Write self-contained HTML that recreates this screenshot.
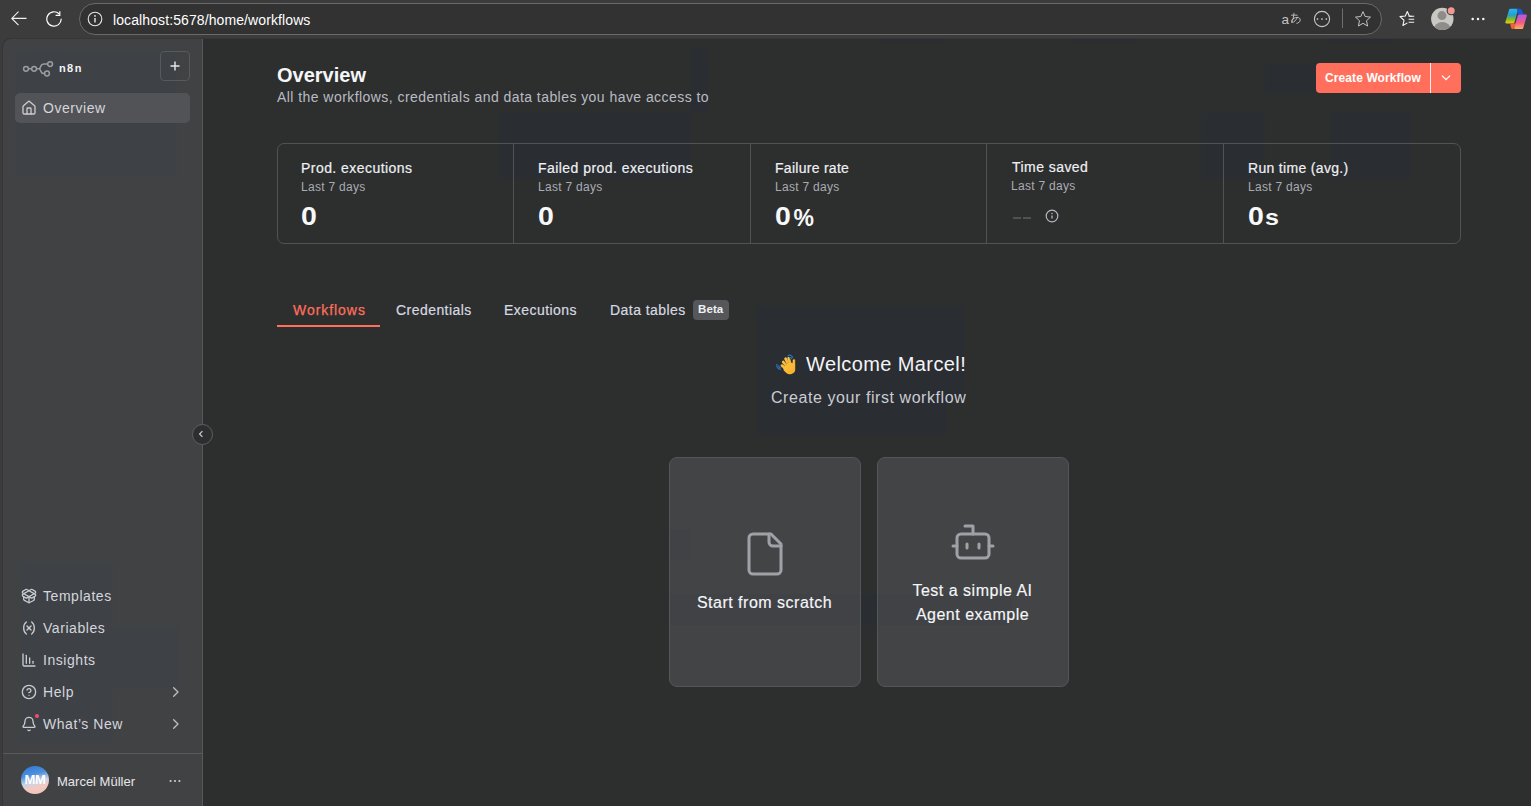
<!DOCTYPE html>
<html><head><meta charset="utf-8">
<style>
*{box-sizing:border-box;margin:0;padding:0}
html,body{width:1531px;height:806px;overflow:hidden;background:#3c3c3c;font-family:"Liberation Sans",sans-serif;}
.abs{position:absolute}
#chrome{position:absolute;left:0;top:0;width:1531px;height:39px;background:#3c3c3c}
#addr{position:absolute;left:79px;top:3px;width:1303px;height:32px;border:1px solid #6a6a6a;border-radius:16px;background:#323232}
#page{position:absolute;left:3px;top:39px;width:1540px;height:780px;background:#2d2e2e;border-radius:8px 0 0 0;box-shadow:0 0 0 1px #363636}
#side{position:absolute;left:3px;top:39px;width:200px;height:780px;background:#414244;border-right:1px solid #58595b;border-radius:8px 0 0 0}
.t{position:absolute;white-space:nowrap;line-height:1}
.nav{font-size:14px;color:#d4d6dc;letter-spacing:0.55px}
.st{font-size:14px;color:#eef0f3;letter-spacing:0.45px;-webkit-text-stroke:0.2px #eef0f3}
.sub{font-size:12px;color:#a9acb3;letter-spacing:0.3px}
.big{font-size:25px;font-weight:bold;color:#f7f8fa;letter-spacing:2px;transform:scaleX(1.14);transform-origin:0 0}
.tab{font-size:14px;color:#d6d9e0;letter-spacing:0.45px;-webkit-text-stroke:0.2px #d6d9e0}
.card{width:192px;height:230px;background:#434446;border:1px solid #555659;border-radius:8px}
.ct{font-size:16px;color:#f5f6f8;letter-spacing:0.5px;-webkit-text-stroke:0.15px #f5f6f8}
.ghost{position:absolute;background:rgba(30,40,60,0.18)}
</style></head><body>
<div id="chrome">
  <!-- back arrow -->
  <svg class="abs" style="left:10px;top:10px" width="18" height="18" viewBox="0 0 18 18"><path d="M16.5 8.4H1.8M8.5 1.6L1.8 8.4l6.7 6.8" stroke="#f2f2f2" stroke-width="1.1" fill="none"/></svg>
  <!-- reload -->
  <svg class="abs" style="left:46px;top:10px" width="18" height="18" viewBox="0 0 18 18"><path d="M15.2 8.8A7.2 7.2 0 1 1 13.2 4" stroke="#fff" stroke-width="1.2" fill="none"/><path d="M13.8 1.2v4.2H9.6" stroke="#fff" stroke-width="1.2" fill="none"/></svg>
  <div id="addr"></div>
  <svg class="abs" style="left:87px;top:11px" width="16" height="16" viewBox="0 0 16 16"><circle cx="8" cy="8" r="6.8" stroke="#e8e8e8" stroke-width="1.1" fill="none"/><path d="M8 7v4.5" stroke="#e8e8e8" stroke-width="1.4"/><circle cx="8" cy="4.9" r="0.9" fill="#e8e8e8"/></svg>
  <div class="t" style="left:113px;top:13px;font-size:14px;color:#fff;letter-spacing:0.1px">localhost:5678/home/workflows</div>
  <svg class="abs" style="left:0;top:0" width="1531" height="39" viewBox="0 0 1531 39">
    <defs>
      <linearGradient id="cl" x1="0" y1="0" x2="0" y2="1"><stop offset="0" stop-color="#22b8f8"/><stop offset="0.45" stop-color="#2a9fc0"/><stop offset="0.7" stop-color="#7cbc2c"/><stop offset="1" stop-color="#f3c80a"/></linearGradient>
      <linearGradient id="cr" x1="0" y1="0" x2="0" y2="1"><stop offset="0" stop-color="#a95cf0"/><stop offset="0.55" stop-color="#f05a88"/><stop offset="1" stop-color="#ffac5c"/></linearGradient>
      <clipPath id="pc"><circle cx="1442.3" cy="18.9" r="11.2"/></clipPath>
    </defs>
    <text x="1281.5" y="23.5" font-family="Liberation Sans" font-size="13.5" fill="#c4c4c4">a</text>
    <path d="M1291.5 15.2h5.6M1294 13.3c-.3 3-.9 6.5-2.2 9.2M1297.5 17.2c-1.6 3.200-3.500 5.200-5 5.200-1 0-1.300-1.200-.6-2.400 1-1.600 3.200-2.600 5.300-2.600 1.800 0 3 1 3 2.600 0 1.800-1.600 3-3.400 3.300" stroke="#c4c4c4" stroke-width="0.9" fill="none" stroke-linecap="round"/>
    <circle cx="1322" cy="19" r="7.6" stroke="#c8c8c8" stroke-width="1.1" fill="none"/>
    <rect x="1316.7" y="18.3" width="1.5" height="1.5" fill="#c8c8c8"/><rect x="1321.2" y="18.3" width="1.5" height="1.5" fill="#c8c8c8"/><rect x="1325.6" y="18.3" width="1.5" height="1.5" fill="#c8c8c8"/>
    <rect x="1342" y="8.5" width="1" height="19.5" fill="#6e6e6e"/>
    <path d="M1363 11.6l2.2 4.9 5.3.6-4 3.6 1.1 5.3-4.6-2.7-4.6 2.7 1.1-5.3-4-3.6 5.3-.6z" stroke="#c4c4c4" stroke-width="1" fill="none" stroke-linejoin="round"/>
    <path d="M1411.5 16.3l-2.2-.25-2-4.6-2 4.6-5.3.6 4 3.6-1.1 5.3 4.1-2.4" stroke="#f4f4f4" stroke-width="1.1" fill="none" stroke-linejoin="round" stroke-linecap="round"/>
    <path d="M1408.6 16.3h5.6M1408.6 19.3h5.6M1408.6 22.3h5.6" stroke="#f4f4f4" stroke-width="1.1"/>
    <circle cx="1442.3" cy="18.9" r="11.2" fill="#cac8c5"/>
    <circle cx="1442" cy="15.6" r="4.5" fill="#8f8c89"/>
    <ellipse cx="1442.3" cy="29.5" rx="8.5" ry="7.6" fill="#8f8c89" clip-path="url(#pc)"/>
    <circle cx="1451.2" cy="10.7" r="4.6" fill="#3c3c3c"/>
    <circle cx="1451.2" cy="10.7" r="3.5" fill="#f19a94"/>
    <circle cx="1472.7" cy="18.9" r="1.25" fill="#f4f4f4"/><circle cx="1478" cy="18.9" r="1.25" fill="#f4f4f4"/><circle cx="1483.3" cy="18.9" r="1.25" fill="#f4f4f4"/>
    <path d="M1510.5 8.8h6.5c.8 0 1.2.6 1 1.3l-3.6 12.4c-.2.6-.7.9-1.3.9h-6.7c-.8 0-1.2-.6-1-1.3l3.7-12.3c.2-.6.7-1 1.4-1z" fill="url(#cl)"/>
    <path d="M1516.5 8.8h3.3c.8 0 1.4.4 1.8 1.2l2.3 4.4h-5.300z" fill="#1a5ad8"/>
    <path d="M1520.3 14.4h5.4c.8 0 1.3.6 1.1 1.3l-3.5 12.3c-.2.6-.7.9-1.3.9h-6.8c-.8 0-1.2-.6-1-1.3l3.7-12.2c.3-.7.8-1 1.4-1z" fill="url(#cr)"/>
    <path d="M1510.2 23.4h5.8l-2.5 5.5h-.8c-.8 0-1.4-.4-1.7-1.2z" fill="#f0643a"/>
  </svg>
</div>

<div id="page"></div>
<div id="side"></div>
<!-- ghosts -->
<div class="abs" style="left:690px;top:49px;width:18px;height:64px;background:#2a2d32"></div>
<div class="abs" style="left:498px;top:113px;width:192px;height:65px;background:#2a2d32"></div>
<div class="abs" style="left:1265px;top:63px;width:51px;height:30px;background:#2a2d32"></div>
<div class="abs" style="left:1201px;top:113px;width:64px;height:65px;background:#2a2d32"></div>
<div class="abs" style="left:1330px;top:113px;width:80px;height:65px;background:#2a2d32"></div>
<div class="abs" style="left:757px;top:306px;width:189px;height:128px;background:#2a2d32"></div>
<div class="abs" style="left:946px;top:306px;width:18px;height:94px;background:#2a2d32"></div>
<div class="abs" style="left:881px;top:39px;width:65px;height:3px;background:#2b2d30"></div>
<div class="abs" style="left:1072px;top:39px;width:65px;height:3px;background:#2b2d30"></div>
<div class="abs" style="left:1328px;top:39px;width:64px;height:3px;background:#2b2d30"></div>
<div class="abs" style="left:15px;top:50px;width:162px;height:126px;background:#3e4146"></div>
<div class="abs" style="left:20px;top:562px;width:93px;height:181px;background:#3e4146"></div>
<div class="abs" style="left:85px;top:626px;width:93px;height:63px;background:#3e4146"></div>
<!-- sidebar content -->
<svg class="abs" style="left:20px;top:60px" width="36" height="18" viewBox="20 60 36 18" fill="none" stroke="#9d9d9f" stroke-width="1.5">
  <circle cx="26" cy="68.8" r="2.4"/><circle cx="34.1" cy="68.8" r="2.4"/>
  <path d="M28.4 68.8h3.3M36.5 68.8h2.3"/>
  <path d="M38.8 68.8c1.5 0 1.6-1.2 2-2.5c.5-1.6 1.2-2.2 3-2.2h3.9"/>
  <path d="M38.8 68.8c1.5 0 1.6 1.2 2 2.5c.5 1.6 1.2 2.2 3 2.2h1"/>
  <circle cx="50.1" cy="64.1" r="2.4"/><circle cx="47" cy="73.5" r="2.4"/>
</svg>
<div class="t" style="left:59px;top:62.5px;font-size:11px;font-weight:bold;color:#f4f4f5;letter-spacing:1.4px">n8n</div>
<div class="abs" style="left:160px;top:51px;width:30px;height:30px;border:1px solid #59595c;border-radius:4px"></div>
<svg class="abs" style="left:169px;top:60px" width="12" height="12" viewBox="0 0 12 12"><path d="M6 1.5v9M1.5 6h9" stroke="#e8e8ea" stroke-width="1.4"/></svg>
<div class="abs" style="left:15px;top:93px;width:175px;height:30px;background:#525356;border-radius:5px"></div>
<svg class="abs" style="left:21px;top:100px" width="16" height="16" viewBox="0 0 24 24" fill="none" stroke="#c9cbd1" stroke-width="2" stroke-linecap="round" stroke-linejoin="round"><path d="M15 21v-8a1 1 0 0 0-1-1h-4a1 1 0 0 0-1 1v8"/><path d="M3 10a2 2 0 0 1 .709-1.528l7-5.999a2 2 0 0 1 2.582 0l7 5.999A2 2 0 0 1 21 10v9a2 2 0 0 1-2 2H5a2 2 0 0 1-2-2z"/></svg>
<div class="t nav" style="left:43px;top:101px">Overview</div>

<svg class="abs" style="left:21px;top:588px" width="16" height="16" viewBox="0 0 24 24" fill="none" stroke="#c9cbd1" stroke-width="2" stroke-linecap="round" stroke-linejoin="round"><path d="M12 22v-9"/><path d="M15.17 2.21a1.67 1.67 0 0 1 1.63 0L21 4.57a1.93 1.93 0 0 1 0 3.36L8.82 14.79a1.655 1.655 0 0 1-1.64 0L3 12.43a1.93 1.93 0 0 1 0-3.36z"/><path d="M20 13v3.87a2.06 2.06 0 0 1-1.110 1.830l-6 3.080a1.930 1.930 0 0 1-1.780 0l-6-3.080A2.06 2.06 0 0 1 4 16.87V13"/><path d="M21 12.43a1.93 1.93 0 0 0 0-3.36L8.83 2.2a1.64 1.64 0 0 0-1.63 0L3 4.57a1.93 1.93 0 0 0 0 3.36l12.18 6.86a1.636 1.636 0 0 0 1.630 0z"/></svg>
<div class="t nav" style="left:43px;top:589px">Templates</div>
<svg class="abs" style="left:21px;top:620px" width="16" height="16" viewBox="0 0 24 24" fill="none" stroke="#c9cbd1" stroke-width="2" stroke-linecap="round" stroke-linejoin="round"><path d="M8 21s-4-3-4-9 4-9 4-9"/><path d="M16 3s4 3 4 9-4 9-4 9"/><path d="M15 9l-6 6"/><path d="M9 9l6 6"/></svg>
<div class="t nav" style="left:43px;top:621px">Variables</div>
<svg class="abs" style="left:21px;top:652px" width="16" height="16" viewBox="0 0 24 24" fill="none" stroke="#c9cbd1" stroke-width="2" stroke-linecap="round" stroke-linejoin="round"><path d="M13 17V9"/><path d="M18 17v-3"/><path d="M3 3v16a2 2 0 0 0 2 2h16"/><path d="M8 17V5"/></svg>
<div class="t nav" style="left:43px;top:653px">Insights</div>
<svg class="abs" style="left:21px;top:684px" width="16" height="16" viewBox="0 0 24 24" fill="none" stroke="#c9cbd1" stroke-width="2" stroke-linecap="round" stroke-linejoin="round"><circle cx="12" cy="12" r="10"/><path d="M9.09 9a3 3 0 0 1 5.83 1c0 2-3 3-3 3"/><path d="M12 17h.01"/></svg>
<div class="t nav" style="left:43px;top:685px">Help</div>
<svg class="abs" style="left:168px;top:684px" width="16" height="16" viewBox="0 0 24 24" fill="none" stroke="#bcbdca" stroke-width="2" stroke-linecap="round" stroke-linejoin="round"><path d="m8.5 18.5 6.5-6.5-6.5-6.5"/></svg>
<svg class="abs" style="left:21px;top:716px" width="16" height="16" viewBox="0 0 24 24" fill="none" stroke="#c9cbd1" stroke-width="2" stroke-linecap="round" stroke-linejoin="round"><path d="M10.268 21a2 2 0 0 0 3.464 0"/><path d="M3.262 15.326A1 1 0 0 0 4 17h16a1 1 0 0 0 .74-1.673C19.41 13.956 18 12.499 18 8A6 6 0 0 0 6 8c0 4.499-1.411 5.956-2.738 7.326"/></svg>
<div class="abs" style="left:35px;top:714px;width:4px;height:4px;border-radius:50%;background:#f0506a"></div>
<div class="t nav" style="left:43px;top:717px">What’s New</div>
<svg class="abs" style="left:168px;top:716px" width="16" height="16" viewBox="0 0 24 24" fill="none" stroke="#bcbdca" stroke-width="2" stroke-linecap="round" stroke-linejoin="round"><path d="m8.5 18.5 6.5-6.5-6.5-6.5"/></svg>
<div class="abs" style="left:3px;top:753px;width:199px;height:1px;background:#58595b"></div>
<div class="abs" style="left:21px;top:766px;width:28px;height:28px;border-radius:50%;background:linear-gradient(165deg,#2a78d6 0%,#4f8fdc 33%,#c9d4e6 55%,#f3c9c2 72%,#f1c0b8 100%)"></div>
<div class="t" style="left:21px;top:772.5px;width:28px;text-align:center;font-size:13px;font-weight:bold;color:#fff;letter-spacing:-0.3px">MM</div>
<div class="t" style="left:57px;top:775px;font-size:13px;color:#e6e7ea">Marcel Müller</div>
<svg class="abs" style="left:167px;top:776px" width="16" height="10" viewBox="0 0 16 10"><circle cx="3.6" cy="5" r="1.1" fill="#c9cbd1"/><circle cx="8" cy="5" r="1.1" fill="#c9cbd1"/><circle cx="12.4" cy="5" r="1.1" fill="#c9cbd1"/></svg>
<!-- collapse -->
<div class="abs" style="left:192px;top:424px;width:21px;height:21px;border-radius:50%;background:#2d2e2e;border:1px solid #5e5f62"></div>
<svg class="abs" style="left:196px;top:428px" width="12" height="12" viewBox="0 0 12 12"><path d="M6.4 3.1L3.6 6l2.8 2.9" stroke="#c4c6d2" stroke-width="1.3" fill="none"/></svg>
<div id="content">
<div class="t" style="left:277px;top:65px;font-size:20px;font-weight:bold;color:#f5f6f8">Overview</div>
<div class="t" style="left:277px;top:90px;font-size:14px;color:#b9bcc4;letter-spacing:0.445px">All the workflows, credentials and data tables you have access to</div>
<div class="abs" style="left:1316px;top:63px;width:145px;height:30px;background:#ff6f5c;border-radius:4px"></div>
<div class="abs" style="left:1430px;top:63px;width:1px;height:30px;background:#fff;opacity:.9"></div>
<div class="t" style="left:1325px;top:72px;font-size:12px;font-weight:bold;color:#fff;letter-spacing:0.1px">Create Workflow</div>
<svg class="abs" style="left:1440px;top:72px" width="12" height="12" viewBox="0 0 12 12"><path d="M2 3.6L6 7.6l4-4" stroke="#fff" stroke-width="1.3" fill="none"/></svg>

<div class="abs" style="left:277px;top:143px;width:1184px;height:101px;border:1px solid #515254;border-radius:7px"></div>
<div class="abs" style="left:513px;top:144px;width:1px;height:99px;background:#515254"></div>
<div class="abs" style="left:750px;top:144px;width:1px;height:99px;background:#515254"></div>
<div class="abs" style="left:986px;top:144px;width:1px;height:99px;background:#515254"></div>
<div class="abs" style="left:1223px;top:144px;width:1px;height:99px;background:#515254"></div>

<div class="t st" style="left:301px;top:161px">Prod. executions</div>
<div class="t sub" style="left:301px;top:181px">Last 7 days</div>
<div class="t big" style="left:301px;top:204px">0</div>
<div class="t st" style="left:538px;top:161px">Failed prod. executions</div>
<div class="t sub" style="left:538px;top:181px">Last 7 days</div>
<div class="t big" style="left:538px;top:204px">0</div>
<div class="t st" style="left:775px;top:161px;letter-spacing:0.28px">Failure rate</div>
<div class="t sub" style="left:775px;top:181px">Last 7 days</div>
<div class="t big" style="left:775px;top:204px"><span style="letter-spacing:0">0</span></div>
<div class="t" style="left:793.5px;top:206.5px;font-size:23px;font-weight:bold;color:#f7f8fa">%</div>
<div class="t st" style="left:1012px;top:160px">Time saved</div>
<div class="t sub" style="left:1011px;top:180px">Last 7 days</div>
<div class="abs" style="left:1013px;top:217px;width:8px;height:2px;background:#505155"></div>
<div class="abs" style="left:1023px;top:217px;width:8px;height:2px;background:#505155"></div>
<svg class="abs" style="left:1044px;top:208px" width="16" height="16" viewBox="0 0 16 16"><circle cx="8" cy="8" r="5.8" stroke="#b4b8c2" stroke-width="1.2" fill="none"/><path d="M8 7.4v3.2" stroke="#b4b8c2" stroke-width="1.3"/><circle cx="8" cy="5.5" r=".8" fill="#b0b2b8"/></svg>
<div class="t st" style="left:1248px;top:161px;letter-spacing:0.32px">Run time (avg.)</div>
<div class="t sub" style="left:1248px;top:181px">Last 7 days</div>
<div class="t big" style="left:1248px;top:204px"><span style="letter-spacing:0">0</span><span style="letter-spacing:0;font-size:22px;margin-left:1px">s</span></div>

<div class="t tab" style="left:293px;top:303px;color:#ff6f5c;letter-spacing:0.95px;-webkit-text-stroke:0.25px #ff6f5c">Workflows</div>
<div class="abs" style="left:277px;top:325px;width:103px;height:2px;background:#ff6f5c"></div>
<div class="t tab" style="left:396px;top:303px">Credentials</div>
<div class="t tab" style="left:504px;top:303px">Executions</div>
<div class="t tab" style="left:610px;top:303px">Data tables</div>
<div class="abs" style="left:693px;top:300px;width:36px;height:20px;background:#56575a;border-radius:4px"></div>
<div class="t" style="left:698px;top:304px;font-size:11.5px;font-weight:bold;color:#f0f0f2;letter-spacing:0.1px">Beta</div>

<svg class="abs" style="left:772px;top:350px" width="28" height="28" viewBox="772 350 28 28">
  <defs><linearGradient id="hg" x1="0" y1="0" x2="1" y2="1"><stop offset="0" stop-color="#fcc640"/><stop offset="1" stop-color="#f6ac2c"/></linearGradient></defs>
  <g stroke="url(#hg)" stroke-linecap="round" fill="none">
    <path d="M785.8 369 L782 365.6" stroke-width="2.7"/>
    <path d="M786.8 366.5 L783.2 362" stroke-width="2.7"/>
    <path d="M788.4 365 L785.6 358.7" stroke-width="2.7"/>
    <path d="M790.6 364.5 L788.6 358.3" stroke-width="2.7"/>
    <path d="M793.6 368 L794 360.4" stroke-width="2.5"/>
  </g>
  <path d="M783.5 367.5 L789.5 362.8 L795.2 363.5 L795.2 370 C795 372.5 792.5 374.3 789.5 374.3 C787.2 374.3 785.5 372.5 783.5 370z" fill="url(#hg)"/>
  <g stroke="#2f74c8" stroke-width="1.1" fill="none" stroke-linecap="round">
    <path d="M788 356 C789.4 354.5 791.8 354.8 792.7 357.6"/>
    <path d="M789.6 357.8 C790.4 357.2 791.3 357.6 791.6 358.6"/>
    <path d="M777 364.2 C776.2 366.6 777.6 368.9 780.4 369.4"/>
    <path d="M778.8 365.6 C778.6 366.8 779.3 367.7 780.6 367.9"/>
  </g>
</svg>
<div class="t" style="left:806px;top:354px;font-size:20px;color:#f3f4f6;letter-spacing:0.4px">Welcome Marcel!</div>
<div class="t" style="left:771px;top:390px;font-size:16px;color:#c9ccd3;letter-spacing:0.57px">Create your first workflow</div>

<div class="abs card" style="left:669px;top:457px"></div>
<div class="abs card" style="left:877px;top:457px"></div>
<div class="abs" style="left:670px;top:594px;width:190px;height:31px;background:#404246"></div>
<div class="abs" style="left:861px;top:594px;width:16px;height:31px;background:#2a2d32"></div>
<div class="abs" style="left:878px;top:594px;width:134px;height:31px;background:#404246"></div>
<div class="abs" style="left:670px;top:529px;width:20px;height:31px;background:#404246"></div>
<svg class="abs" style="left:741px;top:530px" width="48" height="48" viewBox="0 0 24 24" fill="none" stroke="#9fa1a7" stroke-width="1.5" stroke-linecap="round" stroke-linejoin="round"><path d="M15 2H6a2 2 0 0 0-2 2v16a2 2 0 0 0 2 2h12a2 2 0 0 0 2-2V7Z"/><path d="M14 2v4a2 2 0 0 0 2 2h4"/></svg>
<div class="t ct" style="left:669px;top:595px;width:191px;text-align:center">Start from scratch</div>
<svg class="abs" style="left:949px;top:518px" width="48" height="48" viewBox="0 0 24 24" fill="none" stroke="#9fa1a7" stroke-width="1.5" stroke-linecap="round" stroke-linejoin="round"><path d="M12 8V4H8"/><rect width="16" height="12" x="4" y="8" rx="2"/><path d="M2 14h2"/><path d="M20 14h2"/><path d="M15 13v2"/><path d="M9 13v2"/></svg>
<div class="t ct" style="left:877px;top:579px;width:191px;text-align:center;line-height:24px;white-space:normal">Test a simple AI<br>Agent example</div>
</div>
</body></html>
